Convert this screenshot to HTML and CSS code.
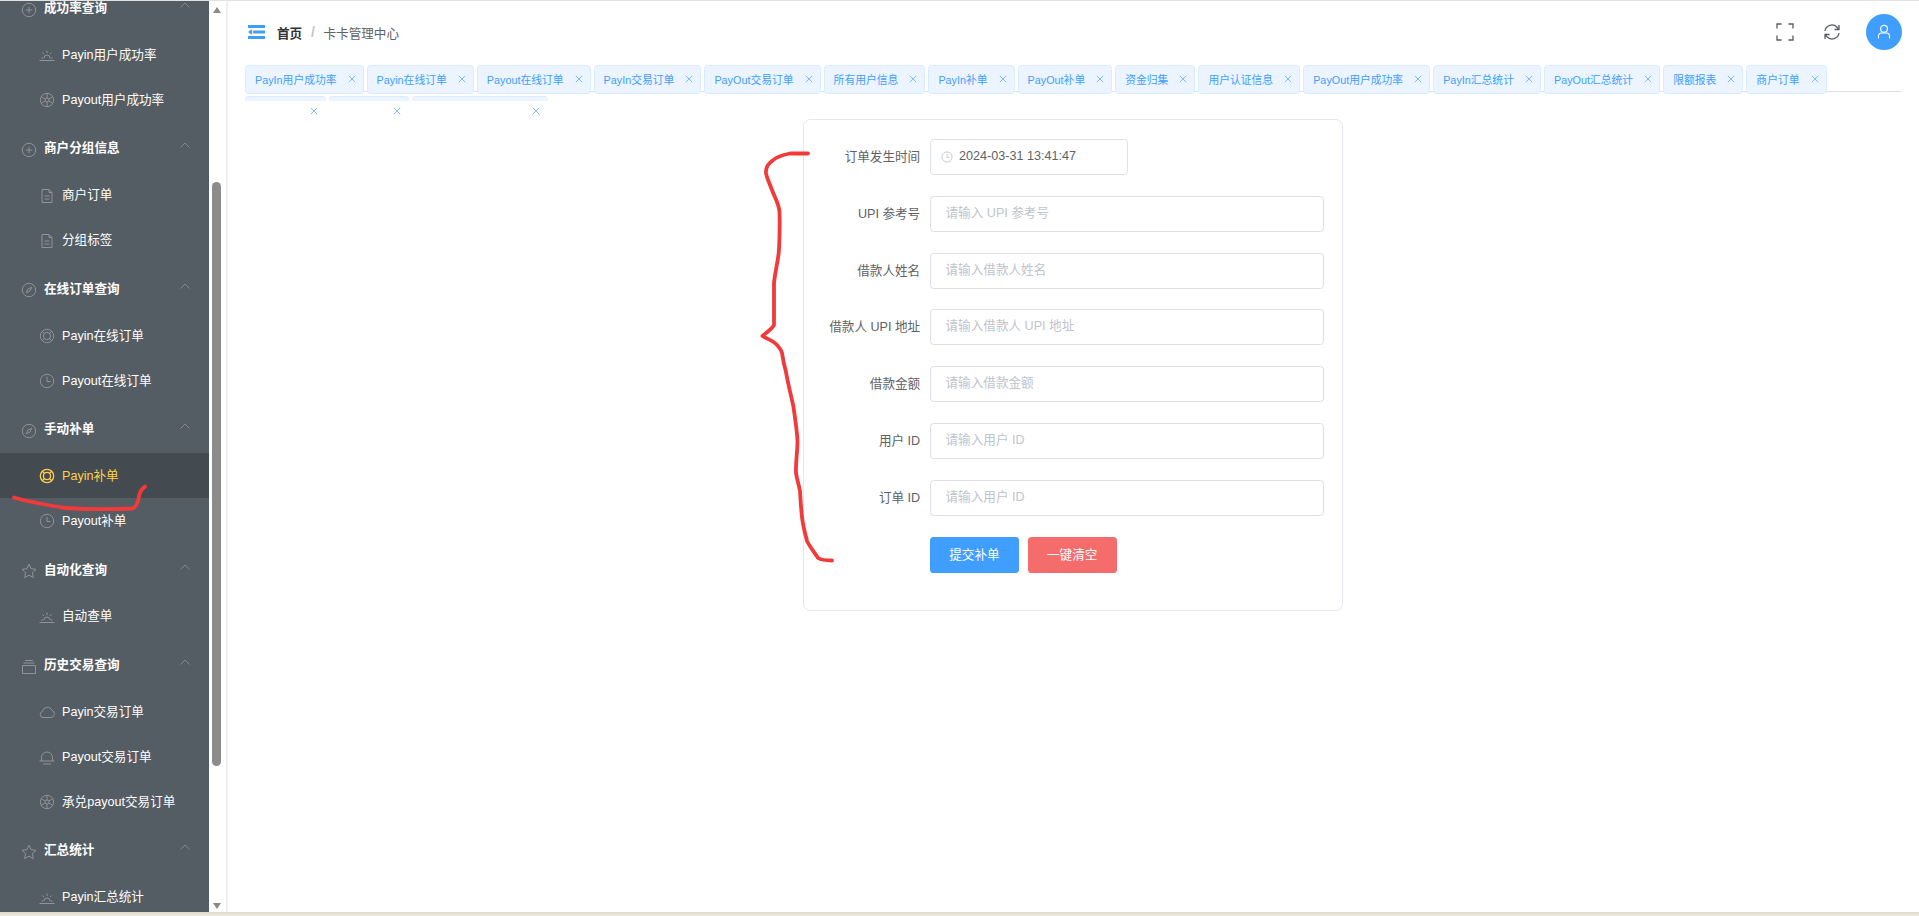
FILE: index.html
```html
<!DOCTYPE html>
<html lang="zh-CN">
<head>
  <meta charset="UTF-8">
  <title>卡卡管理中心</title>
  <link rel="stylesheet" href="styles.css">
</head>
<body>
  <!-- icon set, used through <use> below -->
  <svg class="icon-defs" xmlns="http://www.w3.org/2000/svg">
    <symbol id="i-plus" viewBox="0 0 16 16"><circle cx="8" cy="8" r="6.7"/><path d="M8 4.8v6.4M4.8 8h6.4"/></symbol>
    <symbol id="i-sunrise" viewBox="0 0 16 16"><path d="M0.5 13.5h15M2.5 11h2M11.5 11h2M5 11a3 3 0 0 1 6 0M8 3.5v2.5M3.5 5.5l1.5 1.5M12.5 5.5L11 7"/></symbol>
    <symbol id="i-wheel" viewBox="0 0 16 16"><circle cx="8" cy="8" r="6.7"/><circle cx="8" cy="8" r="2"/><path d="M8 1.3V6M8 10v4.7M2.2 4.7L6.2 7M9.8 9l4 2.3M2.2 11.3L6.2 9M9.8 7l4-2.3"/></symbol>
    <symbol id="i-doc" viewBox="0 0 16 16"><path d="M3 1.5h7l3 3v10H3zM10 1.500v3h3M5.500 8h5M5.500 11h5"/></symbol>
    <symbol id="i-compass" viewBox="0 0 16 16"><circle cx="8" cy="8" r="6.7"/><path d="M10.800 5.200L9 9 5.200 10.800 7 7z"/></symbol>
    <symbol id="i-buoy" viewBox="0 0 16 16"><circle cx="8" cy="8" r="6.7"/><circle cx="8" cy="8" r="3.600"/><path d="M3.300 3.300l2.200 2.200M12.700 3.300l-2.200 2.200M3.300 12.700l2.200-2.200M12.700 12.700l-2.200-2.200"/></symbol>
    <symbol id="i-clock" viewBox="0 0 16 16"><circle cx="8" cy="8" r="6.700"/><path d="M8 3.800V8.500h3.600"/></symbol>
    <symbol id="i-star" viewBox="0 0 16 16"><path d="M8 1.200l2.100 4.500 4.900 .6-3.600 3.400 .9 4.900L8 12.200l-4.300 2.400 .9-4.900L1 6.300l4.900-.6z"/></symbol>
    <symbol id="i-box" viewBox="0 0 16 16"><path d="M4 1.500h8M2.500 4h11M1.500 6.500h13v8h-13z"/></symbol>
    <symbol id="i-cloud" viewBox="0 0 16 16"><path d="M4 13.500a3 3 0 0 1-.6-5.900A5 5 0 0 1 13 6.500a3.600 3.600 0 0 1-1 7z"/></symbol>
    <symbol id="i-bell" viewBox="0 0 16 16"><path d="M.5 12h15M4 15h8M2.500 12V8.500a5.500 5.500 0 0 1 11 0V12"/></symbol>
    <symbol id="i-chevron" viewBox="0 0 10 6"><path d="M.5 5.500L5 1l4.500 4.500"/></symbol>
    <symbol id="i-close" viewBox="0 0 8 8"><path d="M.8 .8l6.400 6.400M7.200 .8L.8 7.200"/></symbol>
  </svg>

  <div class="window">
    <aside class="sidebar">
      <ul class="menu">
        <li class="menu-title"><svg class="icon"><use href="#i-plus"/></svg>成功率查询<svg class="chevron"><use href="#i-chevron"/></svg></li>
        <li class="menu-item"><svg class="icon"><use href="#i-sunrise"/></svg>Payin用户成功率</li>
        <li class="menu-item"><svg class="icon"><use href="#i-wheel"/></svg>Payout用户成功率</li>

        <li class="menu-title"><svg class="icon"><use href="#i-plus"/></svg>商户分组信息<svg class="chevron"><use href="#i-chevron"/></svg></li>
        <li class="menu-item"><svg class="icon"><use href="#i-doc"/></svg>商户订单</li>
        <li class="menu-item"><svg class="icon"><use href="#i-doc"/></svg>分组标签</li>

        <li class="menu-title"><svg class="icon"><use href="#i-compass"/></svg>在线订单查询<svg class="chevron"><use href="#i-chevron"/></svg></li>
        <li class="menu-item"><svg class="icon"><use href="#i-buoy"/></svg>Payin在线订单</li>
        <li class="menu-item"><svg class="icon"><use href="#i-clock"/></svg>Payout在线订单</li>

        <li class="menu-title"><svg class="icon"><use href="#i-compass"/></svg>手动补单<svg class="chevron"><use href="#i-chevron"/></svg></li>
        <li class="menu-item active"><svg class="icon"><use href="#i-buoy"/></svg>Payin补单</li>
        <li class="menu-item"><svg class="icon"><use href="#i-clock"/></svg>Payout补单</li>

        <li class="menu-title"><svg class="icon"><use href="#i-star"/></svg>自动化查询<svg class="chevron"><use href="#i-chevron"/></svg></li>
        <li class="menu-item"><svg class="icon"><use href="#i-sunrise"/></svg>自动查单</li>

        <li class="menu-title"><svg class="icon"><use href="#i-box"/></svg>历史交易查询<svg class="chevron"><use href="#i-chevron"/></svg></li>
        <li class="menu-item"><svg class="icon"><use href="#i-cloud"/></svg>Payin交易订单</li>
        <li class="menu-item"><svg class="icon"><use href="#i-bell"/></svg>Payout交易订单</li>
        <li class="menu-item"><svg class="icon"><use href="#i-wheel"/></svg>承兑payout交易订单</li>

        <li class="menu-title"><svg class="icon"><use href="#i-star"/></svg>汇总统计<svg class="chevron"><use href="#i-chevron"/></svg></li>
        <li class="menu-item"><svg class="icon"><use href="#i-sunrise"/></svg>Payin汇总统计</li>
      </ul>
    </aside>

    <div class="scrollbar">
      <span class="arrow-up"></span>
      <span class="thumb"></span>
      <span class="arrow-down"></span>
    </div>

    <main class="content">
      <header class="topbar">
        <svg class="fold" viewBox="0 0 17 14" fill="#409eff"><rect width="17" height="3"/><rect x="5" y="5.500" width="12" height="3"/><path d="M0 7l4-3v6z"/><rect y="11" width="17" height="3"/></svg>
        <span class="crumb-home">首页</span>
        <span class="crumb-sep">/</span>
        <span class="crumb-page">卡卡管理中心</span>
        <div class="topbar-actions">
          <svg class="action" viewBox="0 0 18 18"><path d="M1 5.500V1h4.500M12.500 1H17v4.500M17 12.500V17h-4.500M5.500 17H1v-4.500"/></svg>
          <svg class="action" viewBox="0 0 18 18"><path d="M2 8a7 7 0 0 1 12-3.800L16 6.500M16 2v4.500h-4.500M16 10a7 7 0 0 1-12 3.800L2 11.500M2 16v-4.500h4.500"/></svg>
          <span class="avatar">
            <svg viewBox="0 0 16 16"><circle cx="8" cy="4.800" r="3.400"/><path d="M2.500 14.500V12a3 3 0 0 1 3-3h5a3 3 0 0 1 3 3v2.500"/></svg>
          </span>
        </div>
      </header>

      <div class="tag-bar">
        <div class="tag-row">
          <span class="tag">PayIn用户成功率<svg class="tag-close"><use href="#i-close"/></svg></span>
          <span class="tag">Payin在线订单<svg class="tag-close"><use href="#i-close"/></svg></span>
          <span class="tag">Payout在线订单<svg class="tag-close"><use href="#i-close"/></svg></span>
          <span class="tag">PayIn交易订单<svg class="tag-close"><use href="#i-close"/></svg></span>
          <span class="tag">PayOut交易订单<svg class="tag-close"><use href="#i-close"/></svg></span>
          <span class="tag">所有用户信息<svg class="tag-close"><use href="#i-close"/></svg></span>
          <span class="tag">PayIn补单<svg class="tag-close"><use href="#i-close"/></svg></span>
          <span class="tag">PayOut补单<svg class="tag-close"><use href="#i-close"/></svg></span>
          <span class="tag">资金归集<svg class="tag-close"><use href="#i-close"/></svg></span>
          <span class="tag">用户认证信息<svg class="tag-close"><use href="#i-close"/></svg></span>
          <span class="tag">PayOut用户成功率<svg class="tag-close"><use href="#i-close"/></svg></span>
          <span class="tag">PayIn汇总统计<svg class="tag-close"><use href="#i-close"/></svg></span>
          <span class="tag">PayOut汇总统计<svg class="tag-close"><use href="#i-close"/></svg></span>
          <span class="tag">限额报表<svg class="tag-close"><use href="#i-close"/></svg></span>
          <span class="tag">商户订单<svg class="tag-close"><use href="#i-close"/></svg></span>
        </div>
        <div class="tag-row">
          <span class="tag-cut w-80"><svg class="tag-close"><use href="#i-close"/></svg></span>
          <span class="tag-cut w-81"><svg class="tag-close"><use href="#i-close"/></svg></span>
          <span class="tag-cut w-138"><svg class="tag-close"><use href="#i-close"/></svg></span>
        </div>
      </div>

      <form class="card">
        <div class="form-row">
          <label class="form-label">订单发生时间</label>
          <div class="date-input">
            <svg viewBox="0 0 16 16"><use href="#i-clock"/></svg>
            <input type="text" value="2024-03-31 13:41:47">
          </div>
        </div>
        <div class="form-row">
          <label class="form-label">UPI 参考号</label>
          <input class="text-input" type="text" placeholder="请输入 UPI 参考号">
        </div>
        <div class="form-row">
          <label class="form-label">借款人姓名</label>
          <input class="text-input" type="text" placeholder="请输入借款人姓名">
        </div>
        <div class="form-row">
          <label class="form-label">借款人 UPI 地址</label>
          <input class="text-input" type="text" placeholder="请输入借款人 UPI 地址">
        </div>
        <div class="form-row">
          <label class="form-label">借款金额</label>
          <input class="text-input" type="text" placeholder="请输入借款金额">
        </div>
        <div class="form-row">
          <label class="form-label">用户 ID</label>
          <input class="text-input" type="text" placeholder="请输入用户 ID">
        </div>
        <div class="form-row">
          <label class="form-label">订单 ID</label>
          <input class="text-input" type="text" placeholder="请输入用户 ID">
        </div>
        <div class="form-buttons">
          <button class="btn btn-primary" type="button">提交补单</button>
          <button class="btn btn-danger" type="button">一键清空</button>
        </div>
      </form>
    </main>
  </div>
  <div class="taskbar-edge"></div>

  <!-- red pen marks drawn on top of the screenshot -->
  <svg class="pen-marks" viewBox="0 0 1919 916">
    <path d="M808 153.500L790 153.500C782 155 776 157 772 161C768 164 765.500 168 766 173C767 179 770 184 772 190C775 198 779 204 779.500 212C780 225 779.500 238 779 250C778 262 775 272 774 283L774 325C771 330 767 332 762.500 336C767 339 772 340 776 344C779 347 781 349 782 353C783 360 784 365 786 372C788 384 791 395 793.500 407C795 418 797 430 797.500 441C797.500 452 795.500 462 796 473C797 480 799 485 800 491C800.500 500 801 508 802 517C803 526 805 533 807 541C810 547 814 552 818 558C822 560.500 827 560.500 832 560.500"/>
    <path d="M14 497.500C22 500 30 501.500 37 503C47 505 57 507 67 508C88 509.500 110 509.500 133 508.500C137 506 137.500 503 138.500 499C139 495 140 492 141.500 490C142.500 488.500 144 487.500 145 486.500"/>
  </svg>
</body>
</html>
```

FILE: styles.css
```css
* {
  box-sizing: border-box;
}

html, body {
  height: 100%;
}

body {
  margin: 0;
  height: 916px;
  overflow: hidden;
  display: flex;
  flex-direction: column;
  background: #fff;
  border-top: 1px solid #e2e2e2;
  font-family: "Liberation Sans", "Noto Sans CJK SC", sans-serif;
  font-size: 12.6px;
  color: #606266;
}

.icon-defs {
  display: none;
}

.window {
  flex: 1;
  min-height: 0;
  display: flex;
}

.taskbar-edge {
  height: 4px;
  background: linear-gradient(#dfdccb, #eeebe0);
}

/* sidebar */
.sidebar {
  width: 209px;
  flex-shrink: 0;
  overflow: hidden;
  background: #545c64;
}

.menu {
  list-style: none;
  margin: -19.6px 0 0;
  padding: 0;
}

.menu-title,
.menu-item {
  display: flex;
  align-items: center;
  color: #fff;
  white-space: nowrap;
}

.menu-title {
  height: 50.4px;
  padding-left: 21px;
  font-weight: bold;
}

.menu-item {
  height: 45px;
  padding: 0 0 2px 39px;
}

.icon {
  width: 16px;
  height: 16px;
  margin-top: 4px;
  margin-right: 7px;
  flex-shrink: 0;
  fill: none;
  stroke: #909399;
  stroke-width: 1;
}

.menu-title .icon {
  margin-top: 6px;
}

.menu-item.active {
  background: #434a50;
  color: #ffd04b;
}

.active .icon {
  stroke: #ffd04b;
  stroke-width: 1.300;
}

.chevron {
  width: 10px;
  height: 6px;
  margin-left: auto;
  margin-right: 19px;
  margin-bottom: 3px;
  fill: none;
  stroke: #909399;
  stroke-width: 0.800;
}

/* fake browser scrollbar for the sidebar */
.scrollbar {
  width: 19px;
  flex-shrink: 0;
  display: flex;
  flex-direction: column;
  align-items: center;
  padding: 6px 2px 3px 0;
  background: #fff;
  border-right: 2px solid #f0f0f0;
}

.arrow-up,
.arrow-down {
  width: 0;
  height: 0;
  border-left: 4.500px solid transparent;
  border-right: 4.500px solid transparent;
}

.arrow-up {
  border-bottom: 6px solid #8a8a8a;
}

.arrow-down {
  margin-top: auto;
  border-top: 6px solid #8a8a8a;
}

.thumb {
  width: 9px;
  height: 584px;
  margin-top: 169px;
  border-radius: 5px;
  background: #8c8c8c;
}

/* main area */
.content {
  flex: 1;
  min-width: 0;
}

.topbar {
  height: 64px;
  display: flex;
  align-items: center;
  padding: 0 17px 2px 20px;
}

.fold {
  width: 17px;
  height: 14px;
  margin-right: 12px;
}

.crumb-home {
  font-weight: bold;
  color: #303133;
}

.crumb-sep {
  margin: 0 8.700px;
  color: #c0c4cc;
  font-size: 14px;
  font-weight: bold;
}

.topbar-actions {
  margin-left: auto;
  display: flex;
  align-items: center;
}

.action {
  width: 18px;
  height: 18px;
  margin-right: 29px;
  fill: none;
  stroke: #5a5e66;
  stroke-width: 1.300;
}

.avatar {
  width: 36px;
  height: 36px;
  margin-left: -4px;
  border-radius: 50%;
  background: #409eff;
  display: flex;
  align-items: center;
  justify-content: center;
}

.avatar svg {
  width: 16px;
  height: 16px;
  fill: none;
  stroke: #fff;
  stroke-width: 1.100;
}

/* opened pages as tags */
.tag-bar {
  position: relative;
  height: 54px;
  margin-right: 18px;
  padding-left: 17px;
}

.tag-bar::before {
  content: "";
  position: absolute;
  left: 17px;
  right: 0;
  top: 26px;
  border-top: 1px solid #dcdfe6;
}

.tag-row {
  position: relative;
  display: flex;
  gap: 3px;
  margin-bottom: 2.700px;
}

.tag {
  height: 28.800px;
  display: flex;
  align-items: center;
  padding: 0 7px 0 9px;
  background: #ecf5ff;
  border: 1px solid #d9ecff;
  border-radius: 3.600px;
  color: #409eff;
  font-size: 10.800px;
  white-space: nowrap;
}

.tag-close {
  width: 8px;
  height: 8px;
  margin-left: 11px;
  fill: none;
  stroke: #409eff;
  stroke-opacity: 0.750;
  stroke-width: 0.900;
}

/* second row of tags: only the top edge and the close mark show */
.tag-cut {
  height: 28.800px;
  display: flex;
  align-items: center;
  justify-content: flex-end;
  padding-right: 8px;
  background: linear-gradient(#ecf5ff 4px, #fff 4px);
  border-top: 1px solid #d9ecff;
  border-radius: 3.600px 3.600px 0 0;
}

.w-80 { width: 80.500px; }
.w-81 { width: 80.500px; }
.w-138 { width: 136px; }

/* form card */
.card {
  width: 540px;
  height: 492px;
  margin-left: 575px;
  padding: 19px 18px 0;
  border: 1px solid #e4e7ed;
  border-radius: 7.200px;
}

.form-row {
  display: flex;
  align-items: center;
  margin-bottom: 20.800px;
}

.form-label {
  width: 108px;
  flex-shrink: 0;
  padding: 0 9.800px 3px 0;
  text-align: right;
  white-space: nowrap;
}

.text-input,
.date-input {
  height: 36px;
  border: 1px solid #dcdfe6;
  border-radius: 3.600px;
  background: #fff;
  font: inherit;
  color: #606266;
}

.text-input {
  flex: 1;
  min-width: 0;
  padding: 0 13.500px 2px 14.500px;
  outline: none;
}

.text-input::placeholder {
  color: #c0c4cc;
  opacity: 1;
}

.date-input {
  width: 198px;
  display: flex;
  align-items: center;
  padding-left: 10px;
}

.date-input svg {
  width: 12px;
  height: 12px;
  fill: none;
  stroke: #c0c4cc;
  stroke-width: 1.200;
}

.date-input input {
  flex: 1;
  min-width: 0;
  margin-left: 6px;
  padding: 0 0 2px;
  border: none;
  outline: none;
  font: inherit;
  color: #606266;
}

.form-buttons {
  display: flex;
  gap: 9px;
  padding-left: 108px;
}

.btn {
  height: 36px;
  padding: 0 19.200px 2px;
  border: none;
  border-radius: 3.600px;
  color: #fff;
  font: inherit;
}

.btn-primary {
  background: #409eff;
}

.btn-danger {
  background: #f56c6c;
}

.pen-marks {
  position: absolute;
  left: 0;
  top: 0;
  width: 1919px;
  height: 916px;
  fill: none;
  stroke: #f23a3a;
  stroke-width: 3.800px;
  stroke-linecap: round;
  stroke-linejoin: round;
  pointer-events: none;
}
```
